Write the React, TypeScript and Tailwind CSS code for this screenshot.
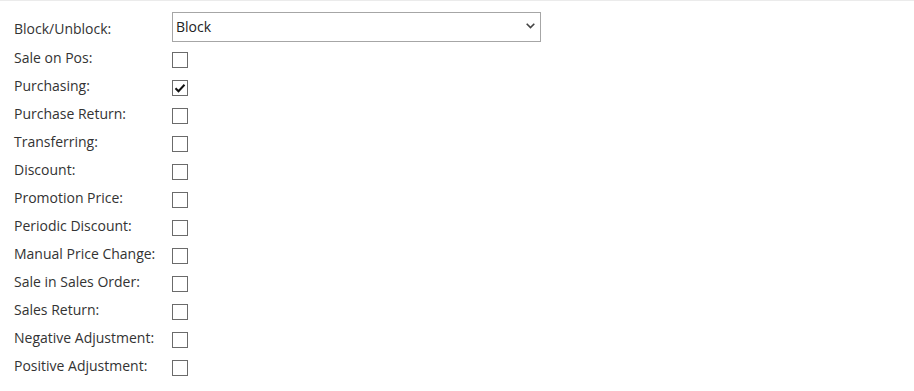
import { useState } from "react";

const fields = [
  { label: "Sale on Pos:", checked: false },
  { label: "Purchasing:", checked: true },
  { label: "Purchase Return:", checked: false },
  { label: "Transferring:", checked: false },
  { label: "Discount:", checked: false },
  { label: "Promotion Price:", checked: false },
  { label: "Periodic Discount:", checked: false },
  { label: "Manual Price Change:", checked: false },
  { label: "Sale in Sales Order:", checked: false },
  { label: "Sales Return:", checked: false },
  { label: "Negative Adjustment:", checked: false },
  { label: "Positive Adjustment:", checked: false },
];

const CheckBox = ({ checked, onClick }: { checked: boolean; onClick: () => void }) => (
  <button
    type="button"
    onClick={onClick}
    className="w-4 h-4 border border-[#6b6b6b] bg-white flex items-center justify-center"
  >
    {checked && (
      <svg width="12" height="12" viewBox="0 0 12 12">
        <path d="M1.5 6.2 L4.5 9.2 L10.5 2.8" fill="none" stroke="#111" strokeWidth="2" />
      </svg>
    )}
  </button>
);

const App = () => {
  const [values, setValues] = useState(fields.map((f) => f.checked));
  const [block, setBlock] = useState("Block");

  const toggle = (i: number) => {
    const next = [...values];
    next[i] = !next[i];
    setValues(next);
  };

  return (
    <div className="w-[914px] h-[391px] bg-white border-t border-[#ebebeb] font-['Segoe_UI','Open_Sans',sans-serif] text-[14px] text-[#333]">
      <div className="pl-[14px] pt-[11px]">
        <div className="flex items-center h-[30px] mb-1">
          <div className="w-[158px] pt-[2px]">Block/Unblock:</div>
          <div className="relative w-[369px] h-[30px]">
            <select
              value={block}
              onChange={(e) => setBlock(e.target.value)}
              className="appearance-none w-full h-full border border-[#a6a6a6] bg-white pl-[3px] pb-[2px] text-[14px] text-[#222] outline-none"
            >
              <option>Block</option>
              <option>Unblock</option>
            </select>
            <svg
              className="absolute right-[6px] top-[11px] pointer-events-none"
              width="9"
              height="6"
              viewBox="0 0 9 6"
            >
              <path d="M0.7 0.7 L4.5 4.5 L8.3 0.7" fill="none" stroke="#444" strokeWidth="1.6" />
            </svg>
          </div>
        </div>
        {fields.map((f, i) => (
          <div key={f.label} className="flex items-center h-7">
            <div className="w-[158px] pb-[6px]">{f.label}</div>
            <CheckBox checked={values[i]} onClick={() => toggle(i)} />
          </div>
        ))}
      </div>
    </div>
  );
};

export default App;
